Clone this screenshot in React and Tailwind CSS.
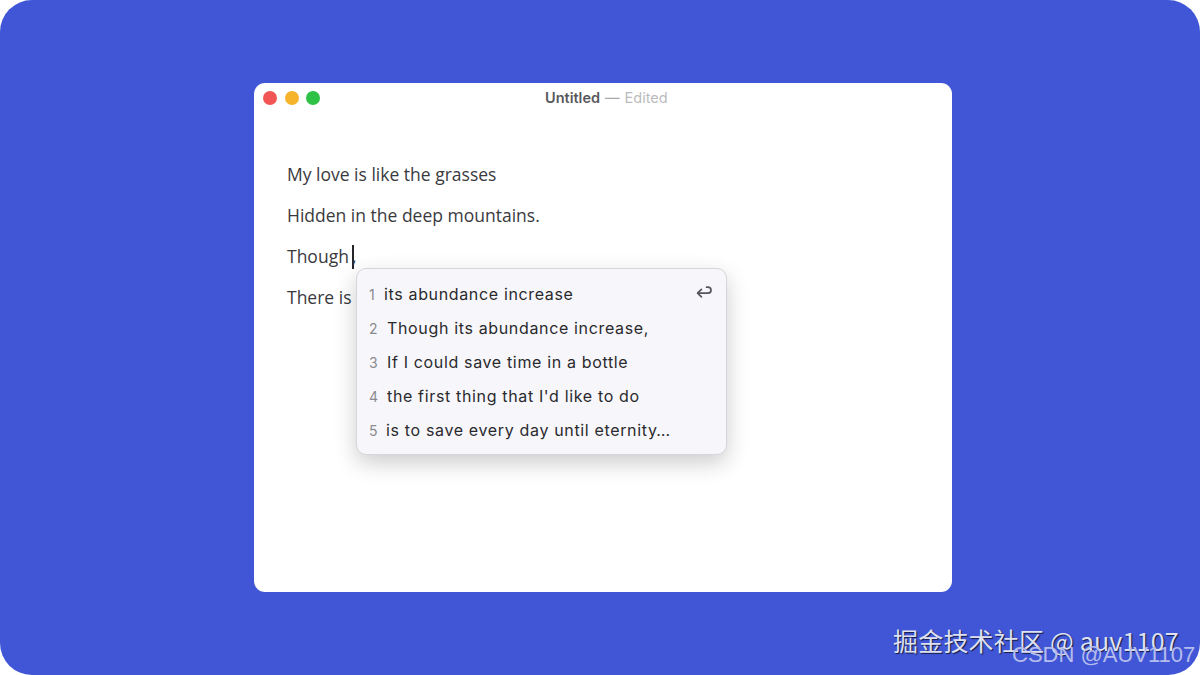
import React from 'react';

const lines = ['My love is like the grasses', 'Hidden in the deep mountains.'];

const suggestions = [
  { n: 1, text: 'its abundance increase', gap: 'ml-[6px]' },
  { n: 2, text: 'Though its abundance increase,', gap: 'ml-[9px]' },
  { n: 3, text: 'If I could save time in a bottle', gap: 'ml-[9px]' },
  { n: 4, text: "the first thing that I'd like to do", gap: 'ml-[9px]' },
  { n: 5, text: 'is to save every day until eternity…', gap: 'ml-[8px]' },
];

const ReturnIcon = () => (
  <svg width="16" height="14" viewBox="0 0 16 14" fill="none" stroke="#55555b" strokeWidth="1.7" strokeLinecap="round" strokeLinejoin="round">
    <path d="M5.4 4.4 1.6 8.2 5.4 11.8" />
    <path d="M1.8 8.2H11.6C13.8 8.2 15 7 15 5.2C15 3.4 13.8 2.2 11.8 2.2H10.6" />
  </svg>
);

export default function App() {
  return (
    <div className="w-[1200px] h-[675px] bg-white overflow-hidden relative">
      <div className="w-full h-full bg-[#4056d6] rounded-[32px] pl-[254px] pt-[83px]">
        {/* Editor window */}
        <div className="relative w-[698px] h-[509px] bg-white rounded-[11px] overflow-hidden font-['Open_Sans',sans-serif]">
          <div className="relative h-[30px] flex items-center pl-[9px] gap-[7.5px]">
            <span className="w-[14px] h-[14px] rounded-full bg-[#f25555]" />
            <span className="w-[14px] h-[14px] rounded-full bg-[#f6b42c]" />
            <span className="w-[14px] h-[14px] rounded-full bg-[#2dc245]" />
            <div className="absolute left-[291px] top-0 h-[30px] flex items-center text-[14.5px] font-['Inter',sans-serif] whitespace-nowrap">
              <span className="font-semibold text-[#58585c]">Untitled</span>
              <span className="ml-[5px] text-[#a9a9ad]">—</span>
              <span className="ml-[5px] text-[#bbbbbe]">Edited</span>
            </div>
          </div>

          <div className="pl-[33px] pt-[41px] text-[17.5px] leading-[41px] text-[#3a3a3e]">
            {lines.map((l) => (
              <p key={l}>{l}</p>
            ))}
            <p className="flex items-center">
              Though
              <span className="ml-[3px] w-[2px] h-[24px] bg-[#26262a]" />
              <span className="ml-[-2px]">,</span>
            </p>
            <p>There is</p>
          </div>

          {/* Suggestion popup */}
          <div className="absolute left-[102px] top-[185px] w-[371px] h-[187px] bg-[#f7f7fb] rounded-[10px] border border-[#d6d6da] shadow-[0_8px_22px_rgba(0,0,0,0.2)] pl-[12px] pt-[8px] font-['Inter',sans-serif]">
            {suggestions.map((s) => (
              <div key={s.n} className="h-[34px] flex items-center whitespace-nowrap">
                <span className="w-[9px] text-[14px] text-[#8a8a90]">{s.n}</span>
                <span className={`${s.gap} text-[16px] tracking-[0.65px] text-[#2a2a2e]`}>{s.text}</span>
              </div>
            ))}
            <div className="absolute right-[14px] top-[16px]">
              <ReturnIcon />
            </div>
          </div>
        </div>
      </div>

      {/* Watermarks */}
      <span className="absolute left-[893px] top-[625px] text-[25px] leading-[30px] tracking-[0.2px] text-[#dfe1f2] whitespace-nowrap font-['Noto_Sans_CJK_SC','Noto_Sans',sans-serif] [text-shadow:1px_1px_1px_rgba(0,0,0,0.7)]">
        掘金技术社区 @ auv1107
      </span>
      <span className="absolute left-[1012px] top-[642px] text-[22px] leading-[26px] text-[#b4bcec] whitespace-nowrap font-['Liberation_Sans',sans-serif]">
        CSDN @AUV1107
      </span>
    </div>
  );
}
